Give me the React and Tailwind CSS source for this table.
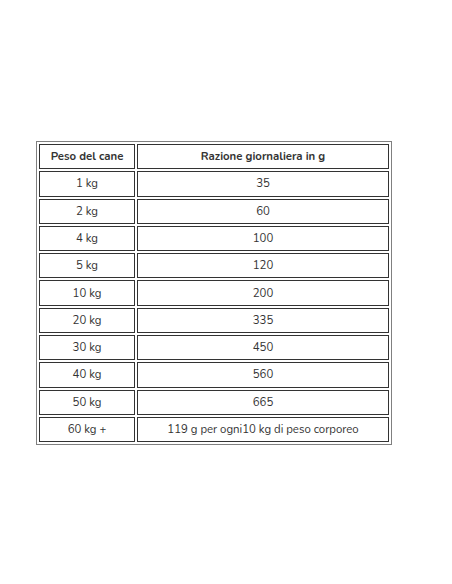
const ROWS = [
  ['1 kg', '35'],
  ['2 kg', '60'],
  ['4 kg', '100'],
  ['5 kg', '120'],
  ['10 kg', '200'],
  ['20 kg', '335'],
  ['30 kg', '450'],
  ['40 kg', '560'],
  ['50 kg', '665'],
  ['60 kg +', '119 g per ogni10 kg di peso corporeo'],
]

export default function App() {
  return (
    <div className="w-[452px] h-[584px] bg-white pt-[141px] pl-[36px] font-['Nunito','Lato',sans-serif] text-[11.4px] text-[#333]">
      <table className="border-separate border-spacing-[2px] border border-[#808080] w-[356px]">
        <thead>
          <tr>
            <th className="w-[96px] h-[25.3px] border border-[#333] font-bold text-center p-0">Peso del cane</th>
            <th className="h-[25.3px] border border-[#333] font-bold text-center p-0">Razione giornaliera in g</th>
          </tr>
        </thead>
        <tbody>
          {ROWS.map(([w, g]) => (
            <tr key={w}>
              <td className="h-[25.3px] border border-[#333] text-center p-0">{w}</td>
              <td className="h-[25.3px] border border-[#333] text-center p-0">{g}</td>
            </tr>
          ))}
        </tbody>
      </table>
    </div>
  )
}
